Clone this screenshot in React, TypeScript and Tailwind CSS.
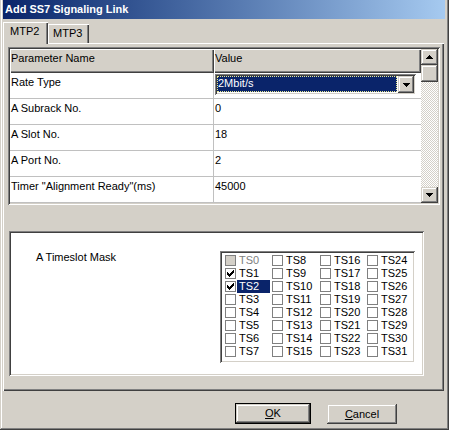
import React from "react";

const raised =
  "shadow-[inset_-1px_-1px_#404040,inset_1px_1px_#d4d0c8,inset_-2px_-2px_#808080,inset_2px_2px_#ffffff]";
const sunken =
  "shadow-[inset_1px_1px_#808080,inset_-1px_-1px_#ffffff,inset_2px_2px_#404040,inset_-2px_-2px_#d4d0c8]";

const params: { name: string; value: string }[] = [
  { name: "Rate Type", value: "2Mbit/s" },
  { name: "A Subrack No.", value: "0" },
  { name: "A Slot No.", value: "18" },
  { name: "A Port No.", value: "2" },
  { name: 'Timer "Alignment Ready"(ms)', value: "45000" },
];

function Arrow({ down }: { down?: boolean }) {
  return (
    <svg width="7" height="4" viewBox="0 0 7 4" shapeRendering="crispEdges">
      <path
        d={down ? "M0 0h7v1H0zM1 1h5v1H1zM2 2h3v1H2zM3 3h1v1H3z" : "M3 0h1v1H3zM2 1h3v1H2zM1 2h5v1H1zM0 3h7v1H0z"}
        fill="#000"
      />
    </svg>
  );
}

function Check() {
  return (
    <svg width="7" height="7" viewBox="0 0 7 7" shapeRendering="crispEdges">
      <path
        d="M6 0h1v1H6zM5 1h2v1H5zM0 2h1v1H0zM4 2h3v1H4zM0 3h2v1H0zM3 3h3v1H3zM0 4h5v1H0zM1 5h3v1H1zM2 6h1v1H2z"
        fill="#000"
      />
    </svg>
  );
}

function Slot({ n }: { n: number }) {
  const checked = n === 1 || n === 2;
  const disabled = n === 0;
  const selected = n === 2;
  return (
    <div className="flex items-center h-[13px]">
      <div
        className={`w-[11px] h-[11px] border border-[#808080] flex items-center justify-center ${
          disabled ? "bg-[#d4d0c8]" : "bg-white"
        }`}
      >
        {checked && <Check />}
      </div>
      <div
        className={`ml-[1px] w-[33px] h-[13px] pl-[2px] ${
          selected ? "bg-[#0a246a] text-white" : disabled ? "text-[#808080]" : "text-black"
        }`}
      >
        TS{n}
      </div>
    </div>
  );
}

export default function App() {
  return (
    <div className="w-[449px] h-[430px] bg-[#d4d0c8] pl-[3px] pr-[4px] pb-[2px] flex flex-col font-['Liberation_Sans',Arial,sans-serif] text-[11px] leading-[13px] text-black shadow-[inset_-1px_-1px_#404040,inset_1px_0_#d4d0c8,inset_-2px_-2px_#808080,inset_2px_0_#ffffff] select-none">
      {/* title bar */}
      <div className="h-[19px] shrink-0 flex items-center pl-[2px] text-white font-bold bg-linear-to-r from-[#0a246a] to-[#a6caf0]">
        Add SS7 Signaling Link
      </div>

      {/* tabs */}
      <div className="mt-[3px] h-[21px] shrink-0 flex items-end">
        <div className="relative z-10 -mb-px w-[45px] h-[22px] bg-[#d4d0c8] pl-[7px] pt-[3px] shadow-[inset_1px_1px_#ffffff,inset_-1px_0_#404040,inset_-2px_0_#808080]">
          MTP2
        </div>
        <div className="w-[41px] h-[19px] bg-[#d4d0c8] pl-[5px] pt-[3px] shadow-[inset_1px_1px_#ffffff,inset_-1px_0_#404040,inset_-2px_0_#808080]">
          MTP3
        </div>
      </div>

      {/* tab panel */}
      <div className="w-[441px] h-[348px] shrink-0 bg-[#d4d0c8] pt-[4px] pl-[5px] shadow-[inset_1px_1px_#ffffff,inset_-1px_-1px_#404040,inset_-2px_-2px_#808080]">
        {/* property grid */}
        <div className={`w-[432px] h-[158px] p-[2px] flex bg-white ${sunken}`}>
          <div className="flex-1 flex flex-col">
            <div className="h-[24px] flex">
              <div className="w-[204px] pl-[1px] pt-[3px] shadow-[inset_1px_1px_#ffffff,inset_-1px_-1px_#404040,inset_-2px_-2px_#808080] bg-[#d4d0c8]">
                Parameter Name
              </div>
              <div className="flex-1 pl-[1px] pt-[3px] shadow-[inset_1px_1px_#ffffff,inset_-1px_-1px_#404040,inset_-2px_-2px_#808080] bg-[#d4d0c8]">
                Value
              </div>
            </div>
            {params.map((p, i) => (
              <div key={p.name} className="h-[26px] flex border-b border-[#c0c0c0]">
                <div className="w-[204px] pl-[1px] pt-[3px] border-r border-[#c0c0c0]">{p.name}</div>
                {i === 0 ? (
                  <div className="flex-1 pl-[1px] pt-[1px]">
                    <div className={`w-[201px] h-[21px] bg-white p-[2px] flex ${sunken}`}>
                      <div className="flex-1 pr-[1px]">
                        <div className="h-[16px] bg-[#0a246a] text-white pl-[1px] pt-[1px] outline outline-1 outline-dotted outline-offset-[-1px] outline-[#e8e890]">
                          {p.value}
                        </div>
                      </div>
                      <div className={`w-[16px] h-[17px] bg-[#d4d0c8] flex items-center justify-center ${raised}`}>
                        <Arrow down />
                      </div>
                    </div>
                  </div>
                ) : (
                  <div className="flex-1 pl-[1px] pt-[3px]">{p.value}</div>
                )}
              </div>
            ))}
          </div>
          {/* scrollbar */}
          <div className="w-[17px] flex flex-col">
            <div className={`h-[16px] bg-[#d4d0c8] flex items-center justify-center ${raised}`}>
              <Arrow />
            </div>
            <div className={`h-[17px] bg-[#d4d0c8] ${raised}`} />
            <div className="flex-1 bg-[image:repeating-conic-gradient(#d4d0c8_0_25%,#ffffff_0_50%)] bg-[length:2px_2px]" />
            <div className={`h-[16px] bg-[#d4d0c8] flex items-center justify-center ${raised}`}>
              <Arrow down />
            </div>
          </div>
        </div>

        {/* timeslot section */}
        <div className={`mt-[26px] ml-[1px] w-[415px] h-[145px] bg-white flex items-start pt-[20px] pl-[27px] ${sunken}`}>
          <div className="w-[184px]">A Timeslot Mask</div>
          <div className={`w-[195px] h-[112px] bg-white pt-[3px] pl-[5px] ${sunken}`}>
            <div className="grid grid-flow-col grid-rows-[repeat(8,13px)] grid-cols-[47px_48px_47px_47px]">
              {Array.from({ length: 32 }, (_, n) => (
                <Slot key={n} n={n} />
              ))}
            </div>
          </div>
        </div>
      </div>

      {/* buttons */}
      <div className="mt-[12px] flex items-start pl-[232px]">
        <div className="w-[76px] h-[21px] border border-black">
          <div className={`w-full h-full bg-[#d4d0c8] flex items-center justify-center ${raised}`}>
            <span>
              <span className="underline underline-offset-[1px]">O</span>K
            </span>
          </div>
        </div>
        <div className={`ml-[16px] mt-[1px] w-[70px] h-[20px] bg-[#d4d0c8] flex items-center justify-center ${raised}`}>
          <span>
            <span className="underline underline-offset-[1px]">C</span>ancel
          </span>
        </div>
      </div>
    </div>
  );
}
